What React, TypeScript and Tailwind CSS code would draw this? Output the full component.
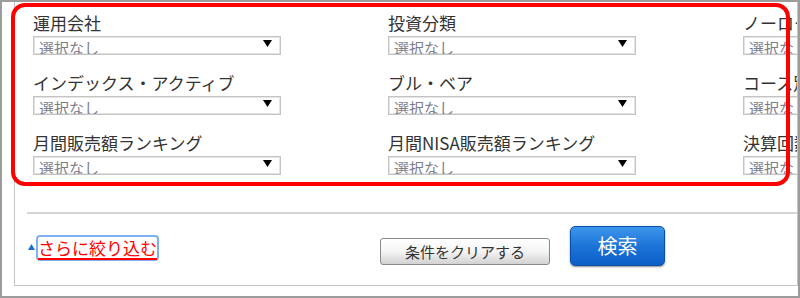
const font = "font-['Noto_Sans_CJK_JP','Liberation_Sans',sans-serif]";

const rows = [
  ["運用会社", "投資分類", "ノーロード"],
  ["インデックス・アクティブ", "ブル・ベア", "コース別"],
  ["月間販売額ランキング", "月間NISA販売額ランキング", "決算回数"],
];

function SelectBox() {
  return (
    <div className="flex h-[19px] w-[248px] items-start justify-between overflow-hidden border border-[#c4c4c4] bg-white shadow-[inset_0_0_0_1px_#e4e4e4]">
      <span className="block pl-[5px] pt-[2px] text-[15px] leading-[18px] text-[#7d7d8c] whitespace-nowrap">選択なし</span>
      <svg className="mr-[8px] mt-[3px] shrink-0" width="9" height="7" viewBox="0 0 9 7">
        <polygon points="0,0 9,0 4.5,7" fill="#000" />
      </svg>
    </div>
  );
}

function Field({ label }: { label: string }) {
  return (
    <div className="w-[355px] shrink-0">
      <div className="h-[20px] text-[17px] leading-[20px] text-[#333] whitespace-nowrap">{label}</div>
      <div className="mt-[3px]">
        <SelectBox />
      </div>
    </div>
  );
}

export default function App() {
  return (
    <div className={`relative h-[298px] w-[800px] overflow-hidden border-2 border-[#9c9c9c] bg-white ${font}`}>
      <div className="pl-[12px]">
        <div className="h-[284px] overflow-hidden border-x border-b border-[#c4c4c4]">
          {/* search fields */}
          <div className="flex flex-col gap-[18px] pl-[18px] pt-[11px]">
            {rows.map((row, i) => (
              <div key={i} className="flex">
                {row.map((label) => (
                  <Field key={label} label={label} />
                ))}
              </div>
            ))}
          </div>

          <div className="ml-[12px] mt-[37px] h-[2px] bg-[#d4d4d4]" />

          <div className="flex items-start pl-[13px]">
            <div className="mt-[21px] flex items-center">
              <svg width="7" height="6" viewBox="0 0 7 6" className="mt-[-2px] shrink-0">
                <polygon points="3.5,0 7,6 0,6" fill="#1a6fd4" />
              </svg>
              <a
                href="#"
                className="ml-[1px] flex h-[26px] w-[123px] shrink-0 items-center justify-center whitespace-nowrap rounded-[4px] border-2 border-[#7fb0f2] text-[17px] leading-[20px] text-[#ff0000] underline decoration-[#ff0000] decoration-2 underline-offset-[3px]"
              >
                さらに絞り込む
              </a>
            </div>
            <button className="ml-[221px] mt-[24px] h-[27px] w-[170px] rounded-[3px] border border-[#8a8a8a] bg-gradient-to-b from-white via-[#f4f4f4] to-[#d2d2d2] text-[15px] leading-[25px] text-[#333]">
              条件をクリアする
            </button>
            <button className="ml-[20px] mt-[12px] h-[40px] w-[95px] rounded-[5px] border border-[#0a50a8] bg-gradient-to-b from-[#3d96ec] via-[#1c74d8] to-[#0b5ec6] text-[20px] leading-[36px] text-white shadow-[0_1px_2px_rgba(0,0,0,0.45)]">
              検索
            </button>
          </div>
        </div>
      </div>

      {/* red annotation frame */}
      <div className="pointer-events-none absolute left-[9px] top-[1px] h-[183px] w-[779px] rounded-[14px] border-4 border-[#ff0000]" />
    </div>
  );
}
